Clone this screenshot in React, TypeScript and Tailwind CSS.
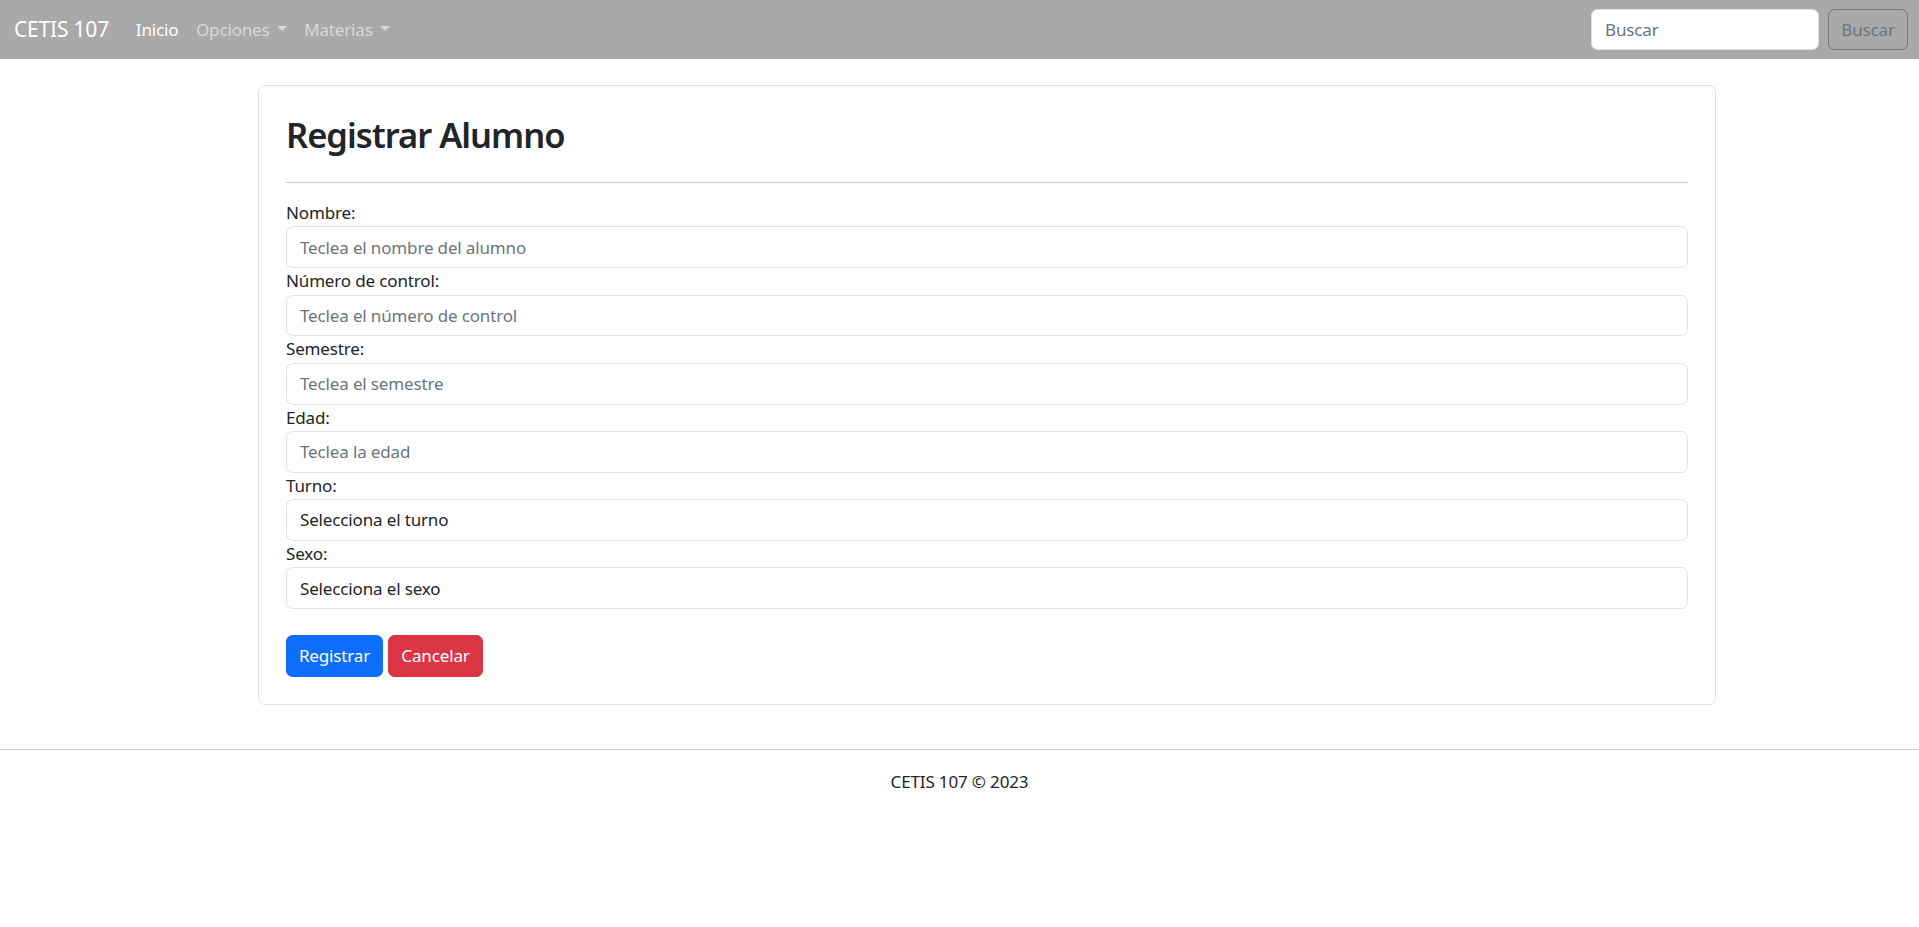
import React from "react";

const font = { fontFamily: '"Noto Sans", "Open Sans", sans-serif' };

function Caret() {
  return (
    <span className="inline-block ml-[7px] align-[4.5px] w-0 h-0 border-t-[5.5px] border-t-current border-x-[5.5px] border-x-transparent" />
  );
}

const fields = [
  { label: "Nombre:", ph: "Teclea el nombre del alumno" },
  { label: "Número de control:", ph: "Teclea el número de control" },
  { label: "Semestre:", ph: "Teclea el semestre" },
  { label: "Edad:", ph: "Teclea la edad" },
];

export default function App() {
  return (
    <div className="min-h-[927px] bg-white text-[#212529] text-[17px] tracking-[-0.15px]" style={font}>
      <nav className="h-[59px] bg-[#a9a9a9] flex items-center pl-[14px] pr-[11px]">
        <span className="text-white text-[21px] mr-[18px] leading-none tracking-[-0.2px]">CETIS 107</span>
        <div className="flex items-center">
          <a className="text-white px-[8.8px]">Inicio</a>
          <a className="text-[#d8d8d8] px-[8.8px]">
            Opciones
            <Caret />
          </a>
          <a className="text-[#d8d8d8] px-[8.8px]">
            Materias
            <Caret />
          </a>
        </div>
        <div className="ml-auto flex items-center gap-[9px]">
          <input
            className="w-[228px] h-[41px] bg-white border border-[#dee2e6] rounded-[6.6px] px-[13px] text-[17px] tracking-[-0.15px] placeholder:text-[#6c757d] outline-none"
            placeholder="Buscar"
            style={font}
          />
          <button className="w-[80px] h-[41px] border border-[#6c757d] rounded-[6.6px] text-[#6c757d] text-[17px]">
            Buscar
          </button>
        </div>
      </nav>

      <div className="ml-[258px] w-[1458px] mt-[26px] border border-[#dee2e6] rounded-[7px] px-[27px] pt-[28px] pb-[27px]">
        <h1 className="text-[34.5px] font-semibold leading-[42px] tracking-[-1px]">Registrar Alumno</h1>
        <hr className="mt-[26px] mb-[17px] border-0 border-t border-[#c8c9ca]" />
        <form className="flex flex-col">
          {fields.map((f) => (
            <div key={f.label} className="flex flex-col">
              <label className="leading-[26.4px]">{f.label}</label>
              <input
                className="h-[41.8px] border border-[#dee2e6] rounded-[6.6px] px-[13px] text-[17px] tracking-[-0.15px] placeholder:text-[#6c757d] outline-none"
                placeholder={f.ph}
                style={font}
              />
            </div>
          ))}
          <div className="flex flex-col">
            <label className="leading-[26.4px]">Turno:</label>
            <div className="h-[41.8px] flex items-center border border-[#dee2e6] rounded-[6.6px] px-[13px]">
              Selecciona el turno
            </div>
          </div>
          <div className="flex flex-col">
            <label className="leading-[26.4px]">Sexo:</label>
            <div className="h-[41.8px] flex items-center border border-[#dee2e6] rounded-[6.6px] px-[13px]">
              Selecciona el sexo
            </div>
          </div>
          <div className="flex gap-[5px] mt-[26px]">
            <button type="button" className="h-[41.8px] w-[97px] bg-[#0d6efd] text-white rounded-[6.6px]">
              Registrar
            </button>
            <button type="button" className="h-[41.8px] w-[95px] bg-[#dc3545] text-white rounded-[6.6px]">
              Cancelar
            </button>
          </div>
        </form>
      </div>

      <footer className="mt-[44px] border-t border-[#d0d0d0] pt-[19px] text-center leading-[26.4px]">
        CETIS 107 © 2023
      </footer>
    </div>
  );
}
